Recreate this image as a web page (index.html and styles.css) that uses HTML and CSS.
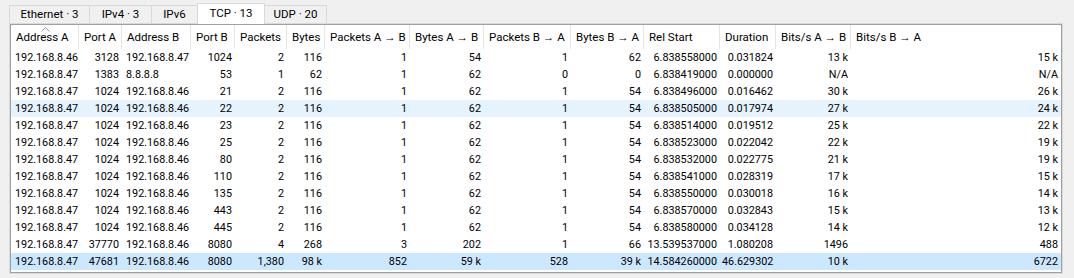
FILE: index.html
```html
<!DOCTYPE html>
<html lang="en">
<head>
    <meta charset="UTF-8">
    <title>Conversations</title>
    <link rel="stylesheet" href="styles.css">
</head>
<body>

    <div class="window">
        <div class="tabs">
            <div class="tab tab-eth">Ethernet · 3</div>
            <div class="tab tab-ipv4">IPv4 · 3</div>
            <div class="tab tab-ipv6">IPv6</div>
            <div class="tab tab-tcp active">TCP · 13</div>
            <div class="tab tab-udp">UDP · 20</div>
        </div>

        <div class="pane">
            <div class="view">
                <table>
                    <colgroup>
                        <col style="width:68px">
                        <col style="width:43px">
                        <col style="width:69px">
                        <col style="width:44px">
                        <col style="width:52px">
                        <col style="width:38px">
                        <col style="width:85px">
                        <col style="width:74px">
                        <col style="width:87px">
                        <col style="width:73px">
                        <col style="width:76px">
                        <col style="width:56px">
                        <col style="width:75px">
                        <col style="width:210px">
                    </colgroup>
                    <thead>
                        <tr>
                            <th class="sorted">Address A
                                <svg class="sort-mark" width="9" height="5" viewBox="0 0 9 5"><polyline points="0.5,4.5 4.5,0.5 8.5,4.5" fill="none" stroke="#9a9a9a" stroke-width="1"/></svg>
                            </th>
                            <th>Port A</th>
                            <th>Address B</th>
                            <th>Port B</th>
                            <th>Packets</th>
                            <th>Bytes</th>
                            <th>Packets A → B</th>
                            <th>Bytes A → B</th>
                            <th>Packets B → A</th>
                            <th>Bytes B → A</th>
                            <th>Rel Start</th>
                            <th>Duration</th>
                            <th>Bits/s A → B</th>
                            <th class="last">Bits/s B → A</th>
                        </tr>
                    </thead>
                    <tbody id="conv-body">
                        <!-- rows are filled in by the script below -->
                    </tbody>
                </table>
            </div>
        </div>
    </div>

    <script>
        // TCP conversations
        const conversations = [
            ['192.168.8.46', 3128, '192.168.8.47', 1024, '2', '116', 1, '54', 1, '62', '6.838558000', '0.031824', '13 k', '15 k'],
            ['192.168.8.47', 1383, '8.8.8.8', 53, '1', '62', 1, '62', 0, '0', '6.838419000', '0.000000', 'N/A', 'N/A'],
            ['192.168.8.47', 1024, '192.168.8.46', 21, '2', '116', 1, '62', 1, '54', '6.838496000', '0.016462', '30 k', '26 k'],
            ['192.168.8.47', 1024, '192.168.8.46', 22, '2', '116', 1, '62', 1, '54', '6.838505000', '0.017974', '27 k', '24 k'],
            ['192.168.8.47', 1024, '192.168.8.46', 23, '2', '116', 1, '62', 1, '54', '6.838514000', '0.019512', '25 k', '22 k'],
            ['192.168.8.47', 1024, '192.168.8.46', 25, '2', '116', 1, '62', 1, '54', '6.838523000', '0.022042', '22 k', '19 k'],
            ['192.168.8.47', 1024, '192.168.8.46', 80, '2', '116', 1, '62', 1, '54', '6.838532000', '0.022775', '21 k', '19 k'],
            ['192.168.8.47', 1024, '192.168.8.46', 110, '2', '116', 1, '62', 1, '54', '6.838541000', '0.028319', '17 k', '15 k'],
            ['192.168.8.47', 1024, '192.168.8.46', 135, '2', '116', 1, '62', 1, '54', '6.838550000', '0.030018', '16 k', '14 k'],
            ['192.168.8.47', 1024, '192.168.8.46', 443, '2', '116', 1, '62', 1, '54', '6.838570000', '0.032843', '15 k', '13 k'],
            ['192.168.8.47', 1024, '192.168.8.46', 445, '2', '116', 1, '62', 1, '54', '6.838580000', '0.034128', '14 k', '12 k'],
            ['192.168.8.47', 37770, '192.168.8.46', 8080, '4', '268', 3, '202', 1, '66', '13.539537000', '1.080208', '1496', '488'],
            ['192.168.8.47', 47681, '192.168.8.46', 8080, '1,380', '98 k', 852, '59 k', 528, '39 k', '14.584260000', '46.629302', '10 k', '6722']
        ];

        const hoverRow = 3;
        const selectedRow = 12;
        const textCols = [0, 2]; // addresses are left aligned

        const body = document.getElementById('conv-body');

        conversations.forEach((conv, i) => {
            const row = document.createElement('tr');
            if (i === hoverRow) row.className = 'hover';
            if (i === selectedRow) row.className = 'selected';

            conv.forEach((value, j) => {
                const cell = document.createElement('td');
                cell.textContent = value;
                if (!textCols.includes(j)) cell.classList.add('num');
                row.appendChild(cell);
            });
            body.appendChild(row);
        });
    </script>
</body>
</html>
```

FILE: styles.css
```css
/* Reset styles */
* {
    margin: 0;
    padding: 0;
    box-sizing: border-box;
}

body {
    font-family: 'Roboto', 'Liberation Sans', sans-serif;
    font-size: 10.8px;
    background-color: #f0f0f0;
    color: #000;
}

.window {
    padding: 3px 0 0 9px;
}

/* Tab bar */
.tabs {
    display: flex;
    align-items: flex-end;
    height: 20px;
}

.tab {
    height: 18px;
    line-height: 17px;
    border: 1px solid #d9d9d9;
    border-bottom: none;
    margin-right: -1px;
    text-align: center;
    background-color: #f0f0f0;
    font-size: 11.5px;
}

.tab-eth { width: 81px; }
.tab-ipv4 { width: 63px; }
.tab-ipv6 { width: 47px; }
.tab-tcp { width: 68px; }
.tab-udp { width: 63px; }

.tab.active {
    height: 21px;
    line-height: 19px;
    background-color: #fff;
    margin-bottom: -1px;
    position: relative;
    z-index: 1;
}

/* Tab pane and list view */
.pane {
    width: 1054px;
    height: 251px;
    border: 1px solid #d9d9d9;
    background-color: #fff;
}

.view {
    height: 249px;
    border: 1px solid #a0a0a0;
    background-color: #fff;
    overflow: hidden;
}

table {
    width: 1050px;
    table-layout: fixed;
    border-collapse: separate;
    border-spacing: 0;
}

th {
    height: 24px;
    padding: 0 4px 0 5px;
    text-align: left;
    font-weight: normal;
    font-size: 11.5px;
    white-space: nowrap;
    overflow: hidden;
    border-right: 1px solid #e5e5e5;
}

th.last {
    border-right: none;
}

th.sorted {
    position: relative;
}

.sort-mark {
    position: absolute;
    top: 2px;
    left: 30px;
}

td {
    height: 17px;
    padding: 0 3px 0 4px;
    white-space: nowrap;
    overflow: hidden;
}

td.num {
    text-align: right;
    padding: 0 3px 0 2px;
}

tr.hover td {
    background-color: #e5f3ff;
}

tr.selected td {
    background-color: #cce8ff;
}
```
